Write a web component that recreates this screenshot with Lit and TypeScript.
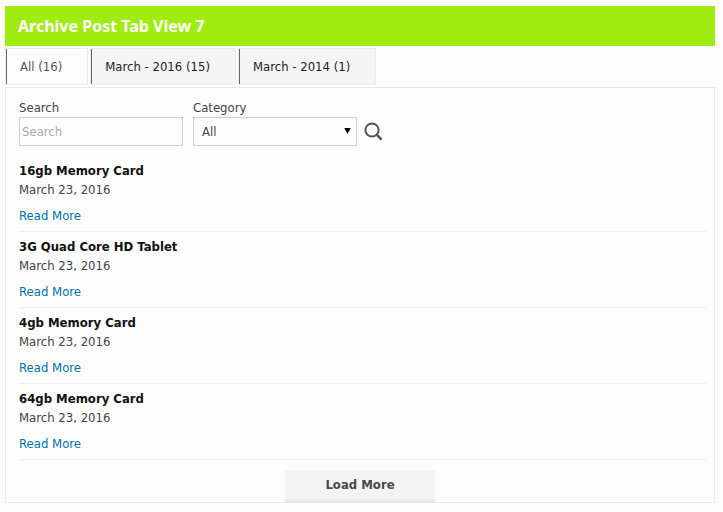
import { LitElement, html, css } from "lit";
import { customElement, state } from "lit/decorators.js";

interface Post {
  title: string;
  date: string;
}

@customElement("app-root")
export class AppRoot extends LitElement {
  static styles = css`
    :host {
      display: block;
      box-sizing: border-box;
      min-height: 100vh;
      padding: 6px 8px 9px 5px;
      background: #fdfdfd;
      color: #444;
      font-family: "DejaVu Sans Condensed", "DejaVu Sans", Tahoma, sans-serif;
      font-size: 13px;
      line-height: 20px;
    }
    * {
      box-sizing: border-box;
    }
    button,
    input,
    select {
      font: inherit;
      color: inherit;
      border-radius: 0;
      margin: 0;
    }
    .heading {
      margin: 0;
      padding: 10px 13px;
      background: #a0ec10;
      color: #fff;
      font-family: "Noto Sans", sans-serif;
      font-size: 16px;
      font-weight: bold;
      line-height: 20px;
    }
    .tabs {
      display: flex;
      gap: 2px;
      padding: 2px 0;
    }
    .tab {
      height: 37px;
      padding: 0 25px 0 14px;
      border: 1px solid #ebebeb;
      box-shadow: inset 1px 0 #666;
      background: #f5f5f5;
      color: #222;
      cursor: pointer;
    }
    .tab.active {
      background: #fdfdfd;
      color: #555;
    }
    .panel {
      display: flex;
      flex-direction: column;
      border: 1px solid #e9e9e9;
    }
    .filters {
      display: flex;
      align-items: flex-end;
      gap: 10px;
      padding: 10px 7px 0 13px;
    }
    .field {
      display: flex;
      flex-direction: column;
      width: 164px;
    }
    .field label {
      line-height: 19px;
    }
    .control {
      width: 100%;
      height: 29px;
      border: 1px solid #ccc;
      background: #fdfdfd;
      padding: 0 2px;
    }
    .control::placeholder {
      color: #aaa;
      opacity: 1;
    }
    .picker {
      display: grid;
      align-items: center;
    }
    .picker > * {
      grid-area: 1 / 1;
    }
    .picker select {
      appearance: none;
      padding: 0 8px;
    }
    .arrow {
      justify-self: end;
      margin-right: 6px;
      pointer-events: none;
    }
    .go {
      display: flex;
      align-items: center;
      height: 29px;
      padding: 0;
      margin-left: -4px;
      border: 0;
      background: none;
      cursor: pointer;
    }
    .posts {
      list-style: none;
      margin: 10px 7px 0 13px;
      padding: 0;
    }
    .post {
      padding: 6px 0;
      border-bottom: 1px solid #f1f1f1;
    }
    .title {
      margin: 0;
      color: #111;
      font-size: 13px;
      line-height: 18px;
    }
    .date {
      margin: 0 0 6px;
    }
    .post a {
      display: block;
      width: max-content;
      color: #0073aa;
      line-height: 19px;
      text-decoration: none;
    }
    .more {
      align-self: center;
      width: 150px;
      height: 32px;
      margin-top: 10px;
      padding: 0;
      border: 0;
      border-bottom: 3px solid #ebebeb;
      background: #f4f4f4;
      color: #4a4a4a;
      font-weight: bold;
      cursor: pointer;
    }
  `;

  @state() private active = 0;

  private tabs = ["All (16)", "March - 2016 (15)", "March - 2014 (1)"];

  private posts: Post[] = [
    { title: "16gb Memory Card", date: "March 23, 2016" },
    { title: "3G Quad Core HD Tablet", date: "March 23, 2016" },
    { title: "4gb Memory Card", date: "March 23, 2016" },
    { title: "64gb Memory Card", date: "March 23, 2016" },
  ];

  render() {
    return html`
      <h1 class="heading">Archive Post Tab View 7</h1>
      <div class="tabs" role="tablist">
        ${this.tabs.map(
          (label, i) => html`<button
            class="tab ${i === this.active ? "active" : ""}"
            role="tab"
            aria-selected=${i === this.active}
            @click=${() => (this.active = i)}
          >${label}</button>`
        )}
      </div>
      <section class="panel">
        <form class="filters" @submit=${(e: Event) => e.preventDefault()}>
          <div class="field">
            <label for="search">Search</label>
            <input id="search" class="control" type="text" placeholder="Search" />
          </div>
          <div class="field">
            <label for="category">Category</label>
            <div class="picker">
              <select id="category" class="control">
                <option>All</option>
              </select>
              <svg class="arrow" width="7" height="8" viewBox="0 0 7 8" aria-hidden="true">
                <path d="M0.3 0H6.7L3.5 6Z" fill="#000" />
              </svg>
            </div>
          </div>
          <button class="go" type="submit" aria-label="Search posts">
            <svg width="20" height="20" viewBox="0 0 20 20" fill="none" stroke="#555" aria-hidden="true">
              <circle cx="9" cy="8" r="6.6" stroke-width="2" />
              <path d="M13.4 12.4L18.6 17.6" stroke-width="2.6" />
            </svg>
          </button>
        </form>
        <ul class="posts">
          ${this.posts.map(
            (p) => html`<li class="post">
              <h2 class="title">${p.title}</h2>
              <p class="date">${p.date}</p>
              <a href="#">Read More</a>
            </li>`
          )}
        </ul>
        <button class="more" type="button">Load More</button>
      </section>
    `;
  }
}
